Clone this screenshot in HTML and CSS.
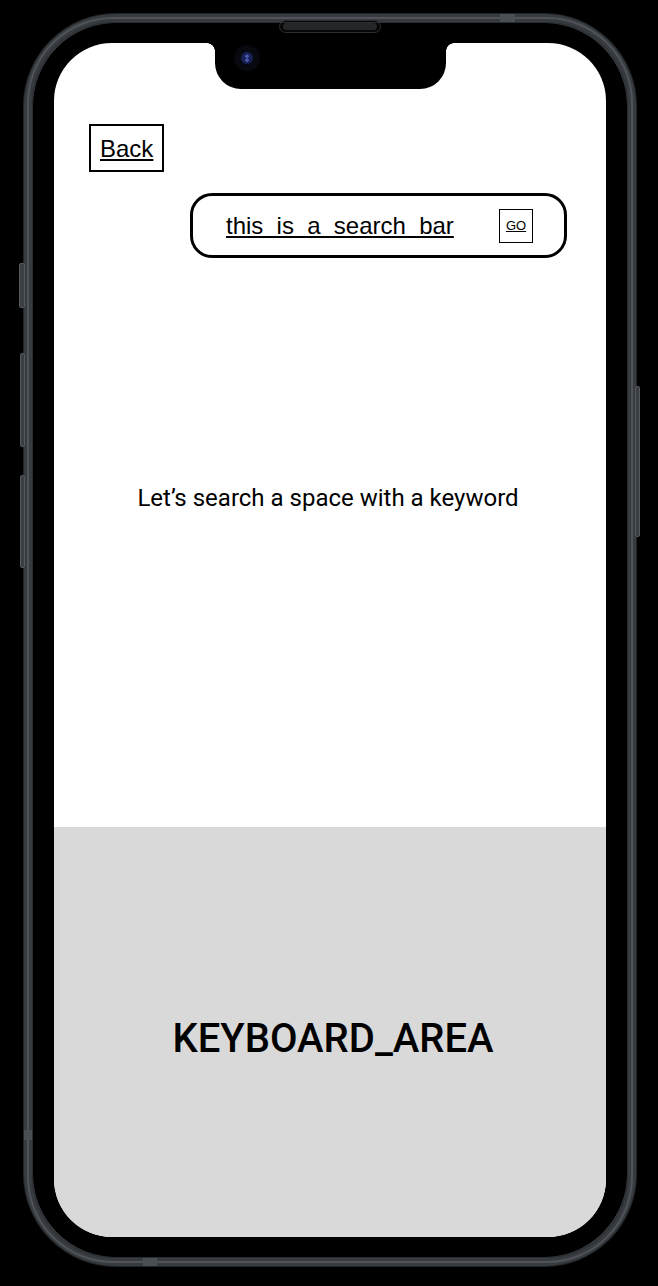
FILE: index.html
```html
<!DOCTYPE html>
<html lang="en">
<head>
<meta charset="utf-8">
<title>Search</title>
<link rel="stylesheet" href="styles.css">
</head>
<body>
<div class="phone">
  <span class="btn btn-action"></span>
  <span class="btn btn-vol-up"></span>
  <span class="btn btn-vol-down"></span>
  <span class="btn btn-power"></span>
  <span class="band band-top"></span>
  <span class="band band-bottom"></span>
  <span class="band band-left"></span>
  <span class="speaker"><span class="grille"></span></span>
  <div class="screen">
    <div class="notch"><span class="camera"><span class="lens"></span></span></div>
    <main class="main">
      <a class="back" href="#">Back</a>
      <div class="search">
        <span class="search-text">this is a search bar</span>
        <a class="go" href="#">GO</a>
      </div>
      <p class="hint">Let’s search a space with a keyword</p>
    </main>
    <div class="keyboard">KEYBOARD_AREA</div>
  </div>
</div>
</body>
</html>
```
FILE: styles.css
```css
html, body {
  margin: 0;
  padding: 0;
  background: #000;
}
body {
  width: 658px;
  height: 1286px;
  overflow: hidden;
}
.phone {
  position: relative;
  box-sizing: border-box;
  margin: 14px 0 0 24px;
  width: 612px;
  height: 1252px;
  border: 9px solid #373b3f;
  border-radius: 92px;
  background: #000;
  padding: 20px 21px;
  box-shadow: 0 0 0 1px #222527;
}
.phone::before {
  content: "";
  position: absolute;
  inset: -6px;
  border: 2px solid #4f5458;
  border-radius: 86px;
  pointer-events: none;
}
.phone::after {
  content: "";
  position: absolute;
  inset: -1px;
  border: 1px solid #2a2d30;
  border-radius: 81px;
  pointer-events: none;
}
.band {
  position: absolute;
  background: #4a4f54;
}
.band-top { top: -9px; left: 467px; width: 15px; height: 9px; }
.band-bottom { bottom: -9px; left: 110px; width: 14px; height: 9px; }
.band-left { left: -9px; top: 1107px; width: 9px; height: 10px; }
.btn {
  position: absolute;
  background: #3b3f43;
  border: 1px solid #55595d;
  box-sizing: border-box;
  border-radius: 2px;
}
.btn-action { left: -14px; top: 240px; width: 6px; height: 45px; }
.btn-vol-up { left: -13px; top: 330px; width: 5px; height: 94px; }
.btn-vol-down { left: -13px; top: 452px; width: 5px; height: 93px; }
.btn-power { left: 602px; top: 363px; width: 5px; height: 151px; }
.speaker {
  position: absolute;
  left: 246px;
  top: -3px;
  width: 102px;
  height: 13px;
  box-sizing: border-box;
  border: 1px solid #2c2f31;
  border-radius: 7px;
  background: #070707;
  padding: 2px 3px;
  display: flex;
}
.grille {
  flex: 1;
  border-radius: 4px;
  background: #242627;
}
.screen {
  position: relative;
  width: 552px;
  height: 1194px;
  border-radius: 58px;
  overflow: hidden;
  background: #fff;
  display: flex;
  flex-direction: column;
}
.notch {
  position: absolute;
  top: 0;
  left: 161px;
  width: 231px;
  height: 46px;
  background: #000;
  border-radius: 0 0 26px 26px;
}
.notch::before,
.notch::after {
  content: "";
  position: absolute;
  top: 0;
  width: 8px;
  height: 8px;
}
.notch::before {
  left: -8px;
  background: radial-gradient(circle at 0 100%, transparent 7.5px, #000 8px);
}
.notch::after {
  right: -8px;
  background: radial-gradient(circle at 100% 100%, transparent 7.5px, #000 8px);
}
.camera {
  position: absolute;
  left: 19px;
  top: 2px;
  width: 26px;
  height: 26px;
  border-radius: 50%;
  background: #08080f;
  display: flex;
  align-items: center;
  justify-content: center;
}
.lens {
  width: 12px;
  height: 12px;
  border-radius: 50%;
  background: radial-gradient(circle at 50% 35%, #4a5aa8 0 1.5px, transparent 2px),
              radial-gradient(circle at 50% 68%, #4a5aa8 0 1.5px, transparent 2px),
              #172058;
}
.main {
  flex: 1;
  display: flex;
  flex-direction: column;
  padding: 81px 39px 0 35px;
  font-family: "Liberation Sans", Arial, sans-serif;
  color: #000;
}
.back {
  align-self: flex-start;
  border: 2px solid #000;
  padding: 9px 9px 7px;
  font-size: 24px;
  line-height: 28px;
  color: #000;
  text-decoration: underline;
}
.search {
  align-self: flex-end;
  box-sizing: border-box;
  margin-top: 21px;
  width: 377px;
  height: 65px;
  border: 3px solid #000;
  border-radius: 22px;
  display: flex;
  align-items: center;
  justify-content: space-between;
  padding: 0 31px 0 33px;
}
.search-text {
  font-size: 24px;
  word-spacing: 6.6px;
  text-decoration: underline;
}
.go {
  box-sizing: border-box;
  width: 34px;
  height: 34px;
  border: 1px solid #000;
  display: flex;
  align-items: center;
  justify-content: center;
  font-size: 13px;
  color: #000;
  text-decoration: underline;
}
.hint {
  margin: 226px 0 0;
  font-family: Roboto, "Noto Sans", sans-serif;
  font-size: 24px;
  line-height: 28px;
  text-align: center;
  color: #000;
}
.keyboard {
  box-sizing: border-box;
  height: 410px;
  padding: 12px 0 0 6px;
  background: #d9d9d9;
  display: flex;
  align-items: center;
  justify-content: center;
  font-family: Roboto, "Noto Sans", sans-serif;
  font-weight: 500;
  font-size: 40px;
  color: #000;
}
```
